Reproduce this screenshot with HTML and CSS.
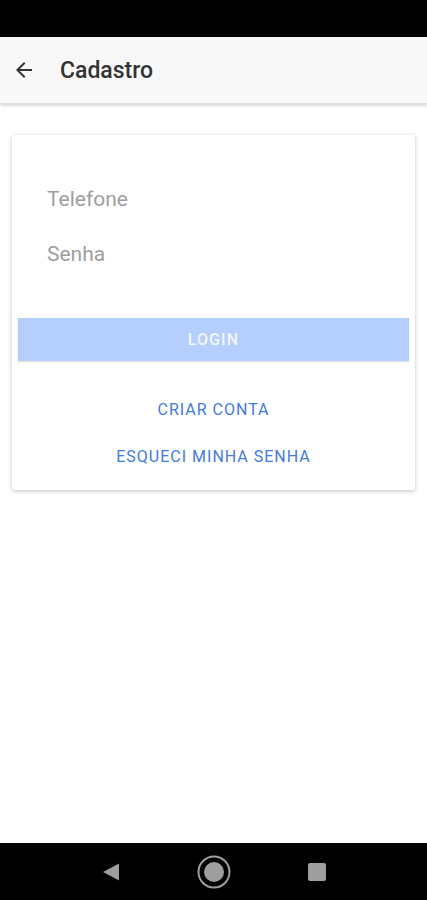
FILE: index.html
```html
<!DOCTYPE html>
<html>
<head>
    <title>Cadastro</title>
    <link rel="stylesheet" href="styles.css">
</head>
<body>
    <div class="status-bar"></div>

    <div class="app-bar">
        <svg class="back" width="24" height="24" viewBox="0 0 24 24">
            <path d="M20 11H7.83l5.59-5.59L12 4l-8 8 8 8 1.41-1.41L7.83 13H20v-2z" fill="#333"/>
        </svg>
        <span class="title">Cadastro</span>
    </div>

    <div class="content">
        <div class="card">
            <div class="fields">
                <input type="text" class="field" placeholder="Telefone">
                <input type="password" class="field" placeholder="Senha">
            </div>
            <button class="login">LOGIN</button>
            <div class="links">
                <a class="link">CRIAR CONTA</a>
                <a class="link">ESQUECI MINHA SENHA</a>
            </div>
        </div>
    </div>

    <div class="nav-bar">
        <svg width="20" height="20" viewBox="0 0 20 20">
            <path d="M18 1.5 L18 18.5 L2 10 Z" fill="#9e9e9e"/>
        </svg>
        <svg width="34" height="34" viewBox="0 0 34 34">
            <circle cx="17" cy="17" r="15.5" fill="none" stroke="#9e9e9e" stroke-width="2"/>
            <circle cx="17" cy="17" r="10" fill="#9e9e9e"/>
        </svg>
        <svg width="20" height="20" viewBox="0 0 20 20">
            <rect x="1" y="1" width="18" height="18" rx="2" fill="#9e9e9e"/>
        </svg>
    </div>
</body>
</html>
```

FILE: styles.css
```css
body {
    margin: 0;
    padding: 0;
    width: 427px;
    height: 900px;
    display: flex;
    flex-direction: column;
    font-family: Roboto, "Noto Sans", sans-serif;
    background-color: #ffffff;
    overflow: hidden;
}

.status-bar {
    height: 37px;
    background-color: #000;
    flex-shrink: 0;
}

.app-bar {
    height: 66px;
    background-color: #f8f8f8;
    display: flex;
    align-items: center;
    padding-left: 12px;
    box-shadow: 0 2px 3px rgba(0, 0, 0, 0.15);
    border-bottom: 1px solid #e2e2e2;
    flex-shrink: 0;
    position: relative;
    z-index: 1;
}

.back {
    margin-right: 24px;
}

.title {
    font-size: 23px;
    font-weight: 500;
    color: #333;
}

.content {
    flex: 1;
    padding: 31px 12px 0;
}

.card {
    background-color: #fff;
    box-shadow: 0 1px 4px rgba(0, 0, 0, 0.25);
    border-radius: 2px;
    padding: 52px 6px 23px;
}

.fields {
    display: flex;
    flex-direction: column;
    gap: 31px;
    padding: 0 29px;
    margin-bottom: 52px;
}

.field {
    border: none;
    outline: none;
    padding: 0;
    height: 24px;
    font-family: Roboto, sans-serif;
    font-size: 21px;
    color: #333;
    background: transparent;
}

.field::placeholder {
    color: #9e9e9e;
}

.login {
    width: 100%;
    height: 43px;
    border: none;
    background-color: #b4cffb;
    color: #f2f6fe;
    font-family: Roboto, sans-serif;
    font-size: 16px;
    font-weight: 500;
    letter-spacing: 1.1px;
    box-shadow: 0 1px 2px rgba(0, 0, 0, 0.15);
    display: block;
}

.links {
    display: flex;
    flex-direction: column;
    align-items: center;
    gap: 27px;
    padding-top: 39px;
}

.link {
    font-size: 16px;
    color: #3f7be0;
    line-height: 20px;
    letter-spacing: 1px;
}

.nav-bar {
    height: 57px;
    background-color: #000;
    display: flex;
    align-items: center;
    justify-content: center;
    gap: 76px;
    flex-shrink: 0;
}
```
